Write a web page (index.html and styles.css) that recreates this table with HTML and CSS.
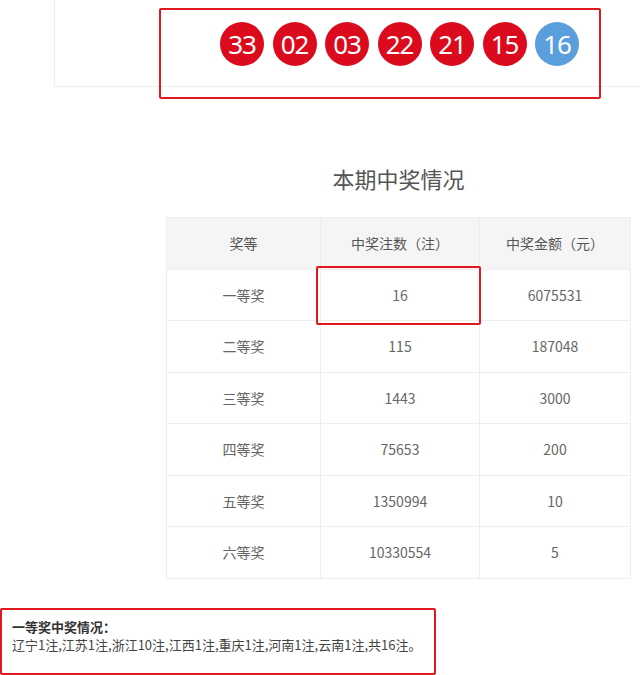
FILE: index.html
```html
<!DOCTYPE html>
<html lang="zh-CN">
<head>
  <meta charset="UTF-8">
  <meta name="viewport" content="width=device-width, initial-scale=1.0">
  <title>本期中奖情况</title>
  <link rel="stylesheet" href="styles.css">
</head>
<body>
  <div class="page">
    <div class="draw-card">
      <div class="balls">
        <span class="ball red">33</span>
        <span class="ball red">02</span>
        <span class="ball red">03</span>
        <span class="ball red">22</span>
        <span class="ball red">21</span>
        <span class="ball red">15</span>
        <span class="ball blue">16</span>
      </div>
    </div>
    <div class="mark mark-balls"></div>

    <div class="prize">
      <h2 class="prize-title">本期中奖情况</h2>
      <table class="prize-table">
        <thead>
          <tr><th>奖等</th><th>中奖注数（注）</th><th>中奖金额（元）</th></tr>
        </thead>
        <tbody>
          <tr><td>一等奖</td><td>16</td><td>6075531</td></tr>
          <tr><td>二等奖</td><td>115</td><td>187048</td></tr>
          <tr><td>三等奖</td><td>1443</td><td>3000</td></tr>
          <tr><td>四等奖</td><td>75653</td><td>200</td></tr>
          <tr><td>五等奖</td><td>1350994</td><td>10</td></tr>
          <tr><td>六等奖</td><td>10330554</td><td>5</td></tr>
        </tbody>
      </table>
    </div>
    <div class="mark mark-cell"></div>

    <div class="first-prize">
      <p class="first-title">一等奖中奖情况：</p>
      <p class="first-list">辽宁1注,江苏1注,浙江10注,江西1注,重庆1注,河南1注,云南1注,共16注。</p>
    </div>
  </div>
</body>
</html>
```

FILE: styles.css
```css
body {
  margin: 0;
  padding: 0;
  background: #fff;
  font-family: "Noto Sans CJK SC", "Noto Sans", sans-serif;
  color: #666;
}

.page {
  position: relative;
  width: 640px;
  height: 675px;
  overflow: hidden;
}

.draw-card {
  margin-left: 54px;
  height: 86px;
  border-left: 1px solid #eee;
  border-bottom: 1px solid #eee;
}

.balls {
  display: flex;
  gap: 8.5px;
  padding-top: 22px;
  padding-left: 165px;
}

.ball {
  width: 44px;
  height: 44px;
  border-radius: 50%;
  display: flex;
  justify-content: center;
  align-items: center;
  color: #fff;
  font-family: "Noto Sans", sans-serif;
  font-size: 26px;
  letter-spacing: -1px;
}

.red {
  background: #dc0a1d;
}

.blue {
  background: #5a9fdc;
}

/* red highlight frames drawn over the content */
.mark {
  position: absolute;
  border: 2px solid #e0191f;
  border-radius: 2px;
}

.mark-balls {
  left: 159px;
  top: 8px;
  width: 438px;
  height: 87px;
}

.mark-cell {
  left: 316px;
  top: 266px;
  width: 161px;
  height: 55px;
}

.prize {
  margin-left: 166px;
  width: 465px;
}

.prize-title {
  margin: 76px 0 24px;
  text-align: center;
  font-size: 22px;
  line-height: 30px;
  font-weight: normal;
  color: #555;
}

.prize-table {
  width: 465px;
  border-collapse: collapse;
  table-layout: fixed;
  font-size: 14px;
}

.prize-table th,
.prize-table td {
  height: 50.5px;
  padding: 0;
  border: 1px solid #eee;
  text-align: center;
  font-weight: normal;
  color: #666;
}

.prize-table th {
  background: #f5f5f5;
  color: #555;
}

.prize-table th:nth-child(1) { width: 153px; }
.prize-table th:nth-child(2) { width: 158px; }

.first-prize {
  margin-top: 29px;
  width: 422px;
  height: 63px;
  border: 2px solid #e0191f;
  border-radius: 2px;
  padding: 0 0 0 10px;
  font-size: 13px;
  line-height: 18px;
}

.first-prize p {
  margin: 0;
}

.first-title {
  padding-top: 8px;
  font-weight: bold;
  color: #333;
}

.first-list {
  color: #444;
}
```
